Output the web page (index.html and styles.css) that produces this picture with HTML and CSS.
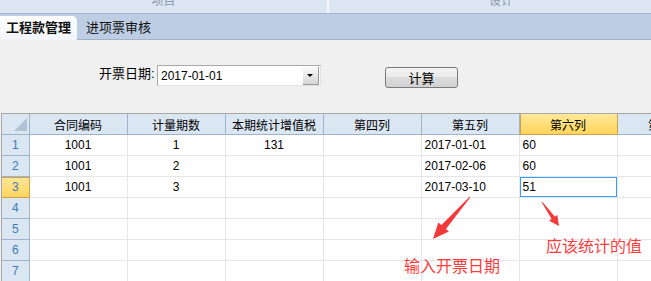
FILE: index.html
```html
<!DOCTYPE html>
<html lang="zh">
<head>
  <meta charset="UTF-8" />
  <title>工程款管理</title>
  <link rel="stylesheet" href="styles.css">
</head>
<body>
  <div class="group-bar">
    <div class="group left">项目</div>
    <div class="group right">设计</div>
  </div>

  <div class="tab-bar">
    <div class="tab active">工程款管理</div>
    <div class="tab">进项票审核</div>
  </div>

  <div class="form-area">
    <label class="date-label">开票日期:</label>
    <div class="date-select">
      <span>2017-01-01</span>
      <span class="drop-btn"></span>
    </div>
    <button class="calc-btn">计算</button>
  </div>

  <div class="grid">
    <table>
      <colgroup>
        <col class="c-rh"><col><col><col><col><col><col><col>
      </colgroup>
      <thead>
        <tr>
          <th class="corner"><span class="tri"></span></th>
          <th>合同编码</th>
          <th>计量期数</th>
          <th>本期统计增值税</th>
          <th>第四列</th>
          <th>第五列</th>
          <th class="sel">第六列</th>
          <th>第七列</th>
        </tr>
      </thead>
      <tbody>
        <tr>
          <td class="rh">1</td>
          <td>1001</td><td>1</td><td>131</td><td></td>
          <td class="l">2017-01-01</td><td class="l">60</td><td></td>
        </tr>
        <tr>
          <td class="rh">2</td>
          <td>1001</td><td>2</td><td></td><td></td>
          <td class="l">2017-02-06</td><td class="l">60</td><td></td>
        </tr>
        <tr>
          <td class="rh sel">3</td>
          <td>1001</td><td>3</td><td></td><td></td>
          <td class="l">2017-03-10</td><td class="l editing">51</td><td></td>
        </tr>
        <tr><td class="rh">4</td><td></td><td></td><td></td><td></td><td></td><td></td><td></td></tr>
        <tr><td class="rh">5</td><td></td><td></td><td></td><td></td><td></td><td></td><td></td></tr>
        <tr><td class="rh">6</td><td></td><td></td><td></td><td></td><td></td><td></td><td></td></tr>
        <tr><td class="rh">7</td><td></td><td></td><td></td><td></td><td></td><td></td><td></td></tr>
      </tbody>
    </table>
  </div>

  <!-- annotations drawn over the grid -->
  <svg class="arrows" width="651" height="281" viewBox="0 0 651 281">
    <polygon points="469.6,196.7 470.4,197.3 445.9,229 448.9,231.6 433,239 438.3,222.4 441.4,225" />
    <polygon points="541.7,202.3 542.3,201.7 554.8,216.6 557.3,214.9 559,226 549.1,220.7 551.6,219" />
  </svg>
  <div class="note note-date">输入开票日期</div>
  <div class="note note-value">应该统计的值</div>
</body>
</html>
```

FILE: styles.css
```css
body {
  margin: 0;
  width: 651px;
  height: 281px;
  overflow: hidden;
  background-color: #f0f0f0;
  font-family: "Liberation Sans", "Noto Sans CJK SC", sans-serif;
  font-size: 12px;
  color: #000;
  position: relative;
}
.group-bar {
  display: flex;
  height: 13px;
  background-color: #dce6f3;
  border-bottom: 1px solid #a6b5c9;
  overflow: hidden;
}
.group {
  text-align: center;
  color: #8d99aa;
  line-height: 12px;
  margin-top: -5px;
  flex-shrink: 0;
}
.group.left {
  width: 327px;
  border-right: 2px solid #f4f8fc;
}
.group.right {
  width: 344px;
}
.tab-bar {
  display: flex;
  align-items: flex-end;
  height: 25px;
  background-color: #bccde4;
  border-bottom: 1px solid #a3b1c4;
}
.tab {
  height: 23px;
  line-height: 23px;
  padding: 0 6px;
  font-size: 13px;
  color: #111;
}
.tab.active {
  width: 65px;
  margin-bottom: -1px;
  height: 24px;
  font-weight: bold;
  border-top-right-radius: 5px;
  background: linear-gradient(#ffffff, #f1f4f8);
}
.tab + .tab {
  margin-left: 3px;
}
.form-area {
  display: flex;
  align-items: flex-start;
  height: 73px;
  padding-left: 99px;
}
.date-label {
  margin-top: 26px;
  font-size: 13px;
  line-height: 16px;
  width: 58px;
}
.date-select {
  margin-top: 25px;
  width: 159px;
  height: 19px;
  display: flex;
  align-items: center;
  justify-content: space-between;
  background: #fff;
  border: 1px solid #a9a9a9;
  border-right-color: #e2e2e2;
  border-bottom-color: #e2e2e2;
  padding-left: 3px;
}
.drop-btn {
  width: 15px;
  height: 17px;
  margin-right: 1px;
  background: linear-gradient(#fafafa, #d6d6d6);
  border-right: 1px solid #9a9a9a;
  border-bottom: 1px solid #9a9a9a;
  position: relative;
}
.drop-btn::after {
  content: "";
  position: absolute;
  left: 4px;
  top: 7px;
  border-left: 3px solid transparent;
  border-right: 3px solid transparent;
  border-top: 3px solid #000;
}
.calc-btn {
  margin-top: 27px;
  margin-left: 64px;
  width: 73px;
  height: 21px;
  padding: 0;
  font-family: inherit;
  font-size: 13px;
  border: 1px solid #7a7a7a;
  border-radius: 3px;
  background: linear-gradient(#f4f4f4 0%, #ebebeb 45%, #dcdcdc 50%, #d2d2d2 100%);
  color: #000;
}
.grid {
  border-top: 1px solid #a8a8a8;
  border-left: 1px solid #a8a8a8;
  margin-left: 1px;
  background: #fff;
  height: 200px;
  overflow: hidden;
}
table {
  border-collapse: collapse;
  table-layout: fixed;
  width: 713px;
}
col {
  width: 98px;
}
col.c-rh {
  width: 27px;
}
th, td {
  height: 20px;
  padding: 0;
  border-right: 1px solid #e6e6e6;
  border-bottom: 1px solid #e6e6e6;
  text-align: center;
  font-weight: normal;
  white-space: nowrap;
  overflow: hidden;
}
th {
  background-color: #dbe6f3;
  border-right-color: #9fb3cb;
  border-bottom-color: #9fb3cb;
  font-size: 12px;
}
th.corner {
  position: relative;
}
.tri {
  position: absolute;
  right: 2px;
  bottom: 3px;
  border-left: 13px solid transparent;
  border-bottom: 13px solid #b3c2d3;
}
td.rh {
  background-color: #dbe6f3;
  border-right-color: #9fb3cb;
  border-bottom-color: #9fb3cb;
  color: #3d7ab8;
}
th.sel, td.rh.sel {
  background: linear-gradient(#ffe89a, #ffd45a);
  border-right-color: #d2a04a;
  border-bottom-color: #d2a04a;
  box-shadow: inset 1px 0 0 #d2a04a;
}
td.rh.sel {
  box-shadow: inset 0 1px 0 #d2a04a;
}
td.l {
  text-align: left;
  padding-left: 3px;
}
td.editing {
  box-shadow: inset 0 0 0 1px #3c9df5;
}
.arrows {
  position: absolute;
  left: 0;
  top: 0;
  fill: #f23a3a;
}
.note {
  position: absolute;
  color: #ff3c3c;
  font-family: "Noto Sans CJK SC", sans-serif;
  font-size: 16px;
  line-height: 16px;
}
.note-date {
  left: 404px;
  top: 257px;
}
.note-value {
  left: 546px;
  top: 237px;
}
```
